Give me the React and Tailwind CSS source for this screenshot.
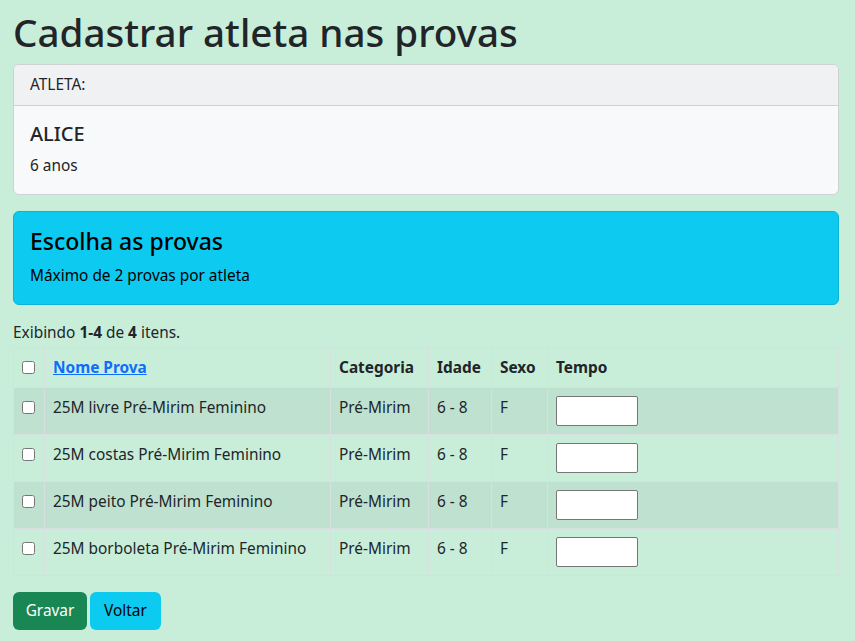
const provas = [
  { nome: "25M livre Pré-Mirim Feminino", categoria: "Pré-Mirim", idade: "6 - 8", sexo: "F" },
  { nome: "25M costas Pré-Mirim Feminino", categoria: "Pré-Mirim", idade: "6 - 8", sexo: "F" },
  { nome: "25M peito Pré-Mirim Feminino", categoria: "Pré-Mirim", idade: "6 - 8", sexo: "F" },
  { nome: "25M borboleta Pré-Mirim Feminino", categoria: "Pré-Mirim", idade: "6 - 8", sexo: "F" },
];

const App = () => {
  return (
    <div
      className="min-h-screen bg-[#c8eed9] pl-[13px] pr-[16px] pt-2 text-[15.4px] leading-6 text-[#212529]"
      style={{ fontFamily: '"Noto Sans", "Open Sans", sans-serif' }}
    >
      <h1 className="mb-2 text-[38.6px] font-medium leading-[48px]">Cadastrar atleta nas provas</h1>

      {/* Atleta card */}
      <div className="mb-4 overflow-hidden rounded-md border border-[#cfd1d3] bg-[#f8f9fa]">
        <div className="border-b border-[#cfd1d3] bg-[#f0f1f2] px-4 py-2">ATLETA:</div>
        <div className="p-4">
          <h5 className="mb-2 text-xl font-medium leading-6">ALICE</h5>
          <p>6 anos</p>
        </div>
      </div>

      {/* Alerta */}
      <div className="mb-4 rounded-md border border-[#0bb3d6] bg-[#0dcaf0] p-4 text-black">
        <h4 className="mb-2 text-[23px] font-medium leading-[27.6px]">Escolha as provas</h4>
        <p>Máximo de 2 provas por atleta</p>
      </div>

      <div className="mb-[2px]">
        Exibindo <b>1-4</b> de <b>4</b> itens.
      </div>

      <table className="w-full table-fixed border-collapse border border-[#d9dee0]">
        <colgroup>
          <col className="w-[31px]" />
          <col className="w-[286px]" />
          <col className="w-[98px]" />
          <col className="w-[63px]" />
          <col className="w-[56px]" />
          <col />
        </colgroup>
        <thead>
          <tr>
            <th className="border border-[#d9dee0] px-2 pb-[7px] pt-2 text-left align-top">
              <div className="flex h-6 items-center">
                <input type="checkbox" className="h-[13px] w-[13px]" />
              </div>
            </th>
            <th className="border border-[#d9dee0] px-2 pb-[7px] pt-2 text-left align-top font-bold">
              <a href="#" className="text-[#0d6efd] underline">Nome Prova</a>
            </th>
            <th className="border border-[#d9dee0] px-2 pb-[7px] pt-2 text-left align-top font-bold">Categoria</th>
            <th className="border border-[#d9dee0] px-2 pb-[7px] pt-2 text-left align-top font-bold">Idade</th>
            <th className="border border-[#d9dee0] px-2 pb-[7px] pt-2 text-left align-top font-bold">Sexo</th>
            <th className="border border-[#d9dee0] px-2 pb-[7px] pt-2 text-left align-top font-bold">Tempo</th>
          </tr>
        </thead>
        <tbody>
          {provas.map((p, i) => (
            <tr key={p.nome} className={i % 2 === 0 ? "bg-[#bee2cf]" : ""}>
              <td className="border border-[#d9dee0] px-2 py-2 align-top">
                <div className="flex h-6 items-center">
                  <input type="checkbox" className="h-[13px] w-[13px]" />
                </div>
              </td>
              <td className="border border-[#d9dee0] px-2 py-2 align-top">{p.nome}</td>
              <td className="border border-[#d9dee0] px-2 py-2 align-top">{p.categoria}</td>
              <td className="border border-[#d9dee0] px-2 py-2 align-top">{p.idade}</td>
              <td className="border border-[#d9dee0] px-2 py-2 align-top">{p.sexo}</td>
              <td className="border border-[#d9dee0] px-2 py-2 align-top">
                <input
                  type="text"
                  className="block h-[30px] w-[82px] rounded-[2px] border border-[#767676] bg-white px-1"
                />
              </td>
            </tr>
          ))}
        </tbody>
      </table>

      <div className="mt-4 flex gap-[3px]">
        <button className="w-[74px] rounded-md bg-[#198754] py-1.5 leading-[26px] text-white">Gravar</button>
        <button className="w-[71px] rounded-md bg-[#0dcaf0] py-1.5 leading-[26px] text-black">Voltar</button>
      </div>
    </div>
  );
};

export default App;
